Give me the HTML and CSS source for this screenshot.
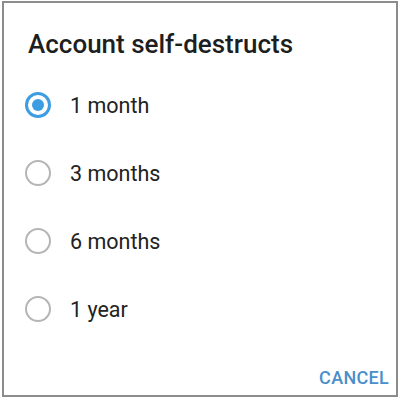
FILE: index.html
```html
<!DOCTYPE html>
<html lang="en">
  <head>
    <meta charset="UTF-8" />
    <title>Account self-destructs</title>
    <link rel="stylesheet" href="styles.css">
  </head>
  <body>
    <div class="dialog">
      <div class="dialog-title">Account self-destructs</div>

      <div class="options">
        <label class="option">
          <span class="radio checked"></span>
          <span class="option-text">1 month</span>
        </label>
        <label class="option">
          <span class="radio"></span>
          <span class="option-text">3 months</span>
        </label>
        <label class="option">
          <span class="radio"></span>
          <span class="option-text">6 months</span>
        </label>
        <label class="option">
          <span class="radio"></span>
          <span class="option-text">1 year</span>
        </label>
      </div>

      <div class="dialog-actions">
        <button class="text-button">CANCEL</button>
      </div>
    </div>
  </body>
</html>
```

FILE: styles.css
```css
body {
  margin: 0;
  padding: 0;
  background-color: #fff;
  font-family: Roboto, "Noto Sans", sans-serif;
  color: #212121;
}

.dialog {
  box-sizing: border-box;
  width: 396px;
  height: 396px;
  margin: 1px 2px;
  border: 2px solid #8c8c8c;
  background-color: #fff;
  display: flex;
  flex-direction: column;
}

.dialog-title {
  padding: 24px 0 0 24px;
  font-size: 26px;
  font-weight: 500;
  line-height: 34px;
  color: #1e1e1e;
}

.options {
  display: flex;
  flex-direction: column;
  margin-top: 10px;
}

.option {
  display: flex;
  align-items: center;
  height: 68px;
  padding-left: 21px;
}

.radio {
  box-sizing: border-box;
  width: 26px;
  height: 26px;
  border-radius: 50%;
  border: 2.5px solid #b5b5b5;
  display: flex;
  align-items: center;
  justify-content: center;
}

.radio.checked {
  border: 3px solid #3d9de3;
}

.radio.checked::after {
  content: "";
  width: 12px;
  height: 12px;
  border-radius: 50%;
  background-color: #3d9de3;
}

.option-text {
  margin-left: 19px;
  font-size: 21.5px;
  color: #222;
}

.dialog-actions {
  margin-top: auto;
  display: flex;
  justify-content: flex-end;
  padding: 0 3px 3px 0;
}

.text-button {
  background: none;
  border: none;
  padding: 4px;
  font-family: Roboto, "Noto Sans", sans-serif;
  font-size: 18px;
  font-weight: 500;
  color: #4a8fc9;
  letter-spacing: 0.3px;
}
```
